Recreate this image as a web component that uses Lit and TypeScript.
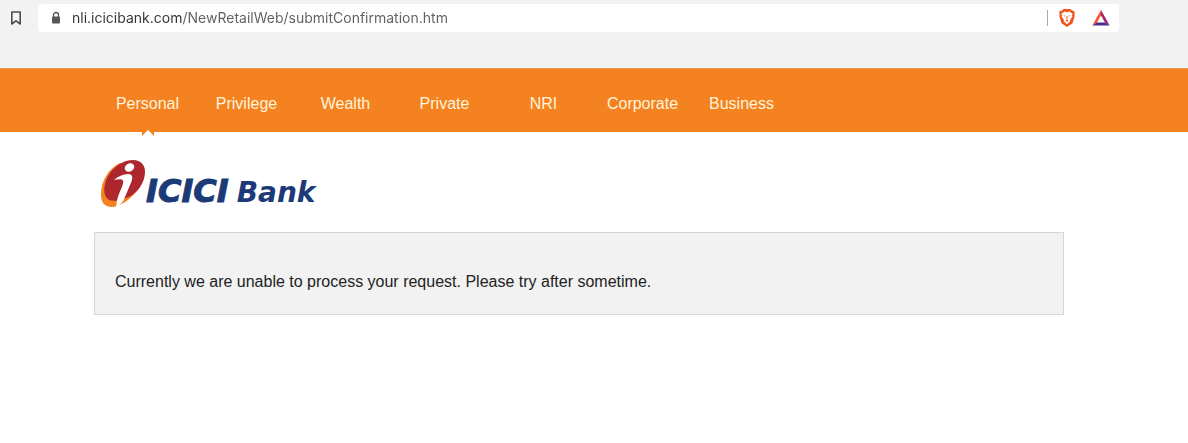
import { LitElement, html, css } from "lit";
import { customElement, property } from "lit/decorators.js";

@customElement("browser-bar")
class BrowserBar extends LitElement {
  @property() url = "";

  static styles = css`
    :host {
      display: block;
    }
    .bar {
      box-sizing: border-box;
      height: 68px;
      padding: 4px 69px 0 4px;
      background: #f2f2f2;
      display: flex;
      align-items: flex-start;
      gap: 10px;
    }
    button {
      border: 0;
      padding: 0;
      background: none;
      width: 24px;
      height: 28px;
      display: flex;
      align-items: center;
      justify-content: center;
    }
    svg {
      display: block;
    }
    .address {
      flex: 1;
      height: 28px;
      background: #fff;
      border-radius: 4px;
      display: flex;
      align-items: center;
      padding: 0 6px 0 13px;
    }
    .url {
      flex: 1;
      min-width: 0;
      height: 28px;
      margin-left: 11px;
      padding: 0;
      border: 0;
      outline: 0;
      font: 14px/28px Inter, sans-serif;
      color: transparent;
      background: linear-gradient(90deg, #303235 110px, #5c5f63 110px);
      -webkit-background-clip: text;
      background-clip: text;
    }
    .rule {
      width: 1px;
      height: 16px;
      background: #aaa;
      margin-right: 7px;
    }
    .shields {
      margin-right: 10px;
    }
  `;

  render() {
    return html`
      <div class="bar">
        <button aria-label="Bookmark this page">
          <svg width="12" height="16" viewBox="0 0 12 16">
            <path d="M1.8 2h8.4v12L6 10.9 1.8 14z" fill="none" stroke="#4b4d50" stroke-width="1.6" stroke-linejoin="round" />
          </svg>
        </button>
        <div class="address">
          <svg width="10" height="14" viewBox="0 0 10 14" aria-hidden="true">
            <path d="M2.5 6V4a2.5 2.5 0 0 1 5 0v2" fill="none" stroke="#55575b" stroke-width="1.3" />
            <rect x="1" y="5.5" width="8" height="7" rx="1" fill="#55575b" />
          </svg>
          <input class="url" type="text" aria-label="Address" .value=${this.url} />
          <span class="rule"></span>
          <button class="shields" aria-label="Shields">
            <svg width="18" height="20" viewBox="0 0 18 20">
              <path d="M5.500 1h7l1.600 1.700 1.500-.2 1.300 2.400-.6 1.600.4 1.600-2.200 7.200L9 19l-5.500-3.700L1.300 8.100l.4-1.600L1.100 4.900l1.300-2.400 1.500.2z" fill="#f1551c" />
              <path d="M6.300 3.600 9 4.300l2.700-.7 1.500 1.300 1.400.4-.6 2 .4 1.300-2.300 3.200.2 1.500L9 16.200l-3.300-2.900.2-1.500-2.300-3.200.4-1.300-.6-2 1.400-.4z" fill="#fff" />
              <path d="M5.400 7.200 7.500 7.800 7 8.800zM12.600 7.200l-2.100.6.5 1zM8.600 8h.8l.3 2.700L9 11.300l-.7-.6zM7.200 12.400 9 11.800l1.800.6L9 13.800z" fill="#f1551c" />
            </svg>
          </button>
          <button aria-label="Rewards">
            <svg width="18" height="18" viewBox="0 0 18 18">
              <path d="M9 1 .3 16.500 5 13.500 9 6.500z" fill="#f8542f" />
              <path d="M9 1l8.700 15.500L13 13.500 9 6.500z" fill="#a0266d" />
              <path d="M.3 16.500h17.400L13 13.500H5z" fill="#4b2d8c" />
            </svg>
          </button>
        </div>
      </div>
    `;
  }
}

@customElement("bank-nav")
class BankNav extends LitElement {
  @property({ attribute: false }) items: string[] = [];
  @property() current = "";

  static styles = css`
    :host {
      display: block;
      background: #f58220;
      border-top: 1px solid #e79a58;
    }
    ul {
      list-style: none;
      margin: 0;
      padding: 0 0 0 98px;
      display: flex;
    }
    li {
      position: relative;
      width: 99px;
    }
    a {
      display: block;
      padding: 25px 0 18px;
      text-align: center;
      color: #fff4dc;
      text-decoration: none;
      font: 16px/20px "Liberation Sans", Arial, sans-serif;
    }
    .notch {
      position: absolute;
      left: 44px;
      top: 61px;
      display: block;
    }
  `;

  render() {
    return html`
      <nav>
        <ul>
          ${this.items.map(
            (item) => html`<li>
              <a href="#" aria-current=${item === this.current ? "page" : "false"}>${item}</a>
              ${item === this.current
                ? html`<svg class="notch" width="12" height="6" viewBox="0 0 12 6" aria-hidden="true">
                    <path d="M0 0h12v6H0z" fill="#f58220" />
                    <path d="M0 6 6 0l6 6z" fill="#fff" />
                  </svg>`
                : null}
            </li>`
          )}
        </ul>
      </nav>
    `;
  }
}

@customElement("bank-logo")
class BankLogo extends LitElement {
  static styles = css`
    :host {
      display: block;
    }
    a {
      display: flex;
      align-items: flex-start;
      width: fit-content;
      color: #1c3a78;
      text-decoration: none;
      font: italic bold 28px/36px "DejaVu Sans", sans-serif;
      white-space: nowrap;
    }
    svg {
      display: block;
    }
    .name {
      display: flex;
      align-items: baseline;
      gap: 8px;
      margin-top: 14px;
    }
    .group {
      font-size: 32px;
      -webkit-text-stroke: 1px #1c3a78;
    }
  `;

  render() {
    return html`
      <a href="#">
        <svg width="46" height="50" viewBox="0 0 46 50" aria-hidden="true">
          <path d="M44 8C46 24 30 46 12 48 4 48 1 43 1 35 1 22 9 9 20 4z" fill="#f58220" />
          <path d="M9 41C2 37 3 24 10 14 17 5 25 1 33 1c8 0 12 5 12 12C45 23 38 35 26 39c-7 3-13 3.500-17 2z" fill="#ae272d" />
          <ellipse cx="29.500" cy="8.500" rx="5" ry="4" transform="rotate(-28 29.500 8.500)" fill="#fff" />
          <path d="M14 21c4-3.500 9-6 14-6 4.500 0 5 3 3.500 7.500L25 38c-2 5-4.500 8-8.500 10-.5-6 2-12 5-19 2-5 2.500-7.500.5-8.300-1.500-.6-4.500-.4-8 .3z" fill="#fff" />
        </svg>
        <span class="name"><span class="group">ICICI</span><span>Bank</span></span>
      </a>
    `;
  }
}

@customElement("app-root")
class AppRoot extends LitElement {
  static styles = css`
    :host {
      display: block;
      min-height: 100vh;
      background: #fff;
      font-family: "Liberation Sans", Arial, sans-serif;
    }
    main {
      margin: 0 124px 0 94px;
      padding-top: 27px;
    }
    .logo {
      margin-left: 6px;
    }
    .message {
      margin: 21px 0 0;
      padding: 39px 20px 23px;
      border: 1px solid #d6d6d6;
      background: #f2f2f2;
      color: #222;
      font-size: 16px;
      line-height: 19px;
    }
  `;

  private sections = ["Personal", "Privilege", "Wealth", "Private", "NRI", "Corporate", "Business"];

  render() {
    return html`
      <browser-bar url="nli.icicibank.com/NewRetailWeb/submitConfirmation.htm"></browser-bar>
      <bank-nav .items=${this.sections} current="Personal"></bank-nav>
      <main>
        <bank-logo class="logo"></bank-logo>
        <p class="message">Currently we are unable to process your request. Please try after sometime.</p>
      </main>
    `;
  }
}
